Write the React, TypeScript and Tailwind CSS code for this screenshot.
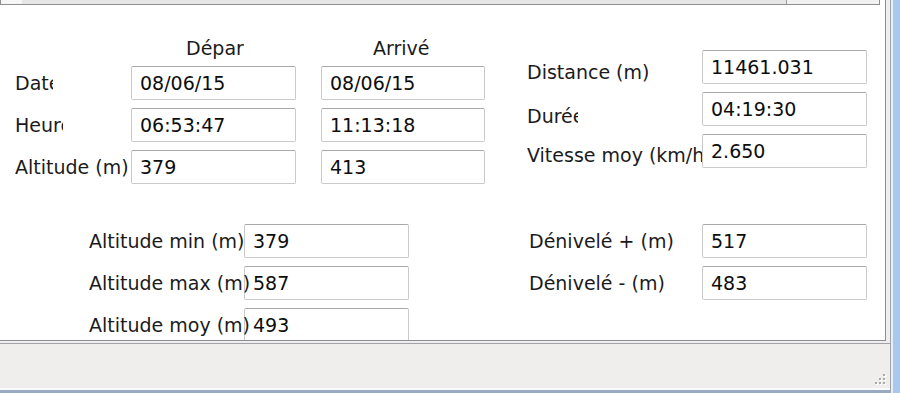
// Fiche parcours : panneau de stats d'une trace GPS.
import React from "react";

type Row = { label: string; labelW?: number; pt?: number; values: string[] };

const topLeft: Row[] = [
  { label: "Date", labelW: 38, values: ["08/06/15", "08/06/15"] },
  { label: "Heure", labelW: 48, values: ["06:53:47", "11:13:18"] },
  { label: "Altitude (m)", values: ["379", "413"] },
];

const topRight: Row[] = [
  { label: "Distance (m)", pt: 11, values: ["11461.031"] },
  { label: "Durée", labelW: 51, pt: 13, values: ["04:19:30"] },
  { label: "Vitesse moy (km/h)", labelW: 175, pt: 10, values: ["2.650"] },
];

const bottomLeft: Row[] = [
  { label: "Altitude min (m)", values: ["379"] },
  { label: "Altitude max (m)", values: ["587"] },
  { label: "Altitude moy (m)", values: ["493"] },
];

const bottomRight: Row[] = [
  { label: "Dénivelé + (m)", values: ["517"] },
  { label: "Dénivelé - (m)", values: ["483"] },
];

function Field({ value, w }: { value: string; w: string }) {
  return (
    <div
      className={`${w} h-[34px] shrink-0 flex items-center pl-[8px] bg-white border border-[#cacaca] border-t-[#a8a8a8] rounded-[2px] text-[#0d0d0d] whitespace-nowrap`}
    >
      {value}
    </div>
  );
}

function Label({ row, colW }: { row: Row; colW: string }) {
  return (
    <div className={`${colW} h-[34px] shrink-0 relative z-10`}>
      <div
        className={`whitespace-nowrap ${row.labelW ? "overflow-hidden" : ""}`}
        style={{ width: row.labelW, paddingTop: row.pt ?? 6 }}
      >
        {row.label}
      </div>
    </div>
  );
}

function Grip() {
  const dots = [
    [8, 0],
    [4, 4],
    [8, 4],
    [0, 8],
    [4, 8],
    [8, 8],
  ];
  return (
    <svg width="12" height="12" viewBox="0 0 12 12">
      {dots.map(([x, y]) => (
        <g key={`${x}-${y}`}>
          <rect x={x + 1} y={y + 1} width="2" height="2" fill="#ffffff" />
          <rect x={x} y={y} width="2" height="2" fill="#a9a9a9" />
        </g>
      ))}
    </svg>
  );
}

export default function App() {
  return (
    <div className="w-[900px] h-[393px] flex bg-[#f0eeed] overflow-hidden font-['DejaVu_Sans',sans-serif] text-[19px] leading-[22px] text-[#1b1b1b]">
      <div className="w-[891px] h-full flex flex-col border-r border-[#9ba3ad]">
        {/* panneau blanc */}
        <div className="pb-[2px] border-b border-[#a2a2aa]">
          <div className="w-[886px] h-[341px] bg-white border-r border-b border-[#8c8c94] overflow-hidden">
            {/* bas de la barre de défilement */}
            <div className="w-[880px] h-[5px] flex border-l border-r border-b border-[#8f8f8f]">
              <div className="w-[21px] bg-[#f6f6f6]" />
              <div className="w-[765px] bg-[#e6e6e6] border-r border-[#9a9a9a]" />
              <div className="flex-1 bg-[#f1f1f1]" />
            </div>

            {/* départ / arrivée + distance */}
            <div className="flex pl-[15px]">
              <div className="w-[470px] shrink-0">
                <div className="flex h-[22px] mt-[32px]">
                  <div className="ml-[171px] w-[58px] overflow-hidden whitespace-nowrap">Départ</div>
                  <div className="ml-[129px] w-[57px] overflow-hidden whitespace-nowrap">Arrivée</div>
                </div>
                <div className="flex flex-col gap-[8px] mt-[7px]">
                  {topLeft.map((row) => (
                    <div key={row.label} className="flex">
                      <Label row={row} colW="w-[116px]" />
                      <Field value={row.values[0]} w="w-[165px]" />
                      <div className="w-[25px] shrink-0" />
                      <Field value={row.values[1]} w="w-[164px]" />
                    </div>
                  ))}
                </div>
              </div>
              <div className="ml-[42px] mt-[45px] flex flex-col gap-[8px]">
                {topRight.map((row) => (
                  <div key={row.label} className="flex">
                    <Label row={row} colW="w-[175px]" />
                    <Field value={row.values[0]} w="w-[165px]" />
                  </div>
                ))}
              </div>
            </div>

            {/* altitudes + dénivelés */}
            <div className="flex mt-[40px]">
              <div className="pl-[89px] flex flex-col gap-[8px]">
                {bottomLeft.map((row) => (
                  <div key={row.label} className="flex">
                    <Label row={row} colW="w-[155px]" />
                    <Field value={row.values[0]} w="w-[165px]" />
                  </div>
                ))}
              </div>
              <div className="ml-[120px] flex flex-col gap-[8px]">
                {bottomRight.map((row) => (
                  <div key={row.label} className="flex">
                    <Label row={row} colW="w-[173px]" />
                    <Field value={row.values[0]} w="w-[165px]" />
                  </div>
                ))}
              </div>
            </div>
          </div>
        </div>

        {/* barre d'état */}
        <div className="flex-1 flex items-end justify-end pr-[3px] pb-[2px]">
          <Grip />
        </div>
        <div className="h-[2px] bg-[#f9fbfd]" />
        <div className="h-[3px] bg-[#98abc3]" />
      </div>
      <div className="w-[2px] h-full bg-[#e8eef5]" />
      <div className="flex-1 h-full bg-[#aac8ed]" />
    </div>
  );
}
